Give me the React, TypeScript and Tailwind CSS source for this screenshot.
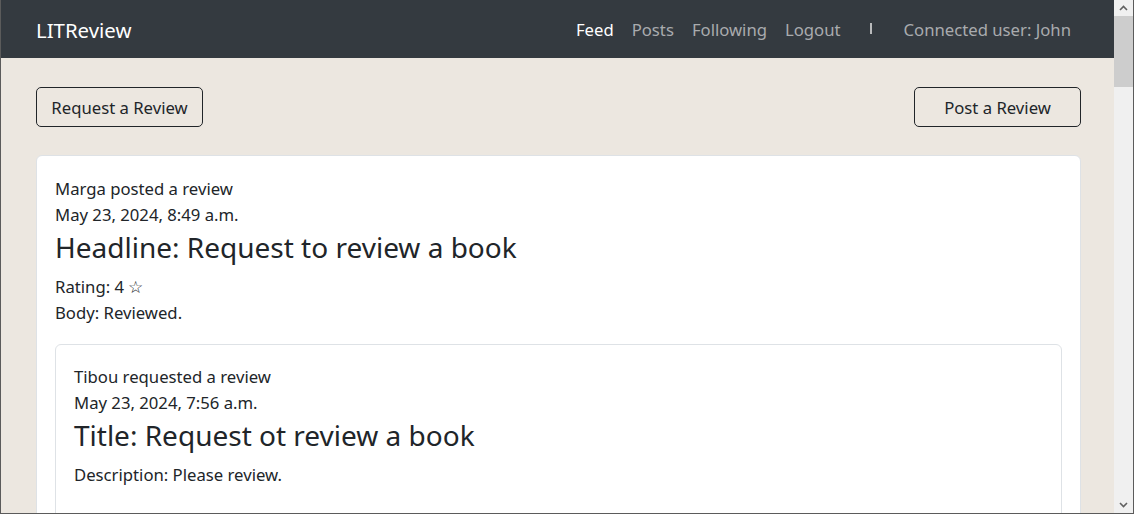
const font = { fontFamily: '"Noto Sans", "Open Sans", sans-serif' };

const NavBar = () => (
  <nav className="h-[58px] shrink-0 bg-[#343a40] flex items-center pl-[35px] pr-[43px] pt-[2px]">
    <span className="text-[20.4px] text-white">LITReview</span>
    <div className="ml-auto flex items-center text-[16.7px]">
      <a className="text-white">Feed</a>
      <a className="ml-[18px] text-[#a9abae]">Posts</a>
      <a className="ml-[18px] text-[#a9abae]">Following</a>
      <a className="ml-[18px] text-[#a9abae]">Logout</a>
      <span className="ml-[29px] mr-[32px] mb-[3px] w-[2px] h-[11px] bg-[#b9babc]" />
      <span className="text-[#a9abae]">Connected user: John</span>
    </div>
  </nav>
);

const ActionButton = ({ label }: { label: string }) => (
  <button className="w-[167px] h-[40px] border border-[#212529] rounded-[5px] text-[16.7px] text-[#212529] pt-[2px]">
    {label}
  </button>
);

const ScrollBar = () => (
  <div className="w-[19px] shrink-0 bg-[#f0f0f0] flex flex-col">
    <div className="h-[16px] flex items-center justify-center">
      <svg width="9" height="6" viewBox="0 0 9 6">
        <polyline points="1,5 4.5,1.5 8,5" fill="none" stroke="#606060" strokeWidth="1.6" />
      </svg>
    </div>
    <div className="h-[71px] bg-[#cdcdcd]" />
    <div className="flex-1" />
    <div className="h-[16px] flex items-center justify-center">
      <svg width="9" height="6" viewBox="0 0 9 6">
        <polyline points="1,1 4.5,4.5 8,1" fill="none" stroke="#606060" strokeWidth="1.6" />
      </svg>
    </div>
  </div>
);

export default function App() {
  return (
    <div
      className="w-[1134px] h-[514px] overflow-hidden flex border-l border-r border-b border-[#5b5b5b] text-[#212529]"
      style={font}
    >
      <div className="flex-1 flex flex-col bg-[#ece7e0] overflow-hidden">
        <NavBar />
        <main className="pl-[35px] pr-[33px]">
          <div className="mt-[29px] flex justify-between">
            <ActionButton label="Request a Review" />
            <ActionButton label="Post a Review" />
          </div>

          <div className="mt-[28px] bg-white border border-[#dee2e6] rounded-[6px] px-[18px] pt-[20px] pb-[18px]">
            <p className="text-[16.7px] leading-[26px]">Marga posted a review</p>
            <p className="text-[16.7px] leading-[26px]">May 23, 2024, 8:49 a.m.</p>
            <h3 className="mt-[2px] text-[28px] leading-[34px]">Headline: Request to review a book</h3>
            <p className="mt-[10px] text-[16.7px] leading-[26px]">Rating: 4 ☆</p>
            <p className="text-[16.7px] leading-[26px]">Body: Reviewed.</p>

            <div className="mt-[18px] border border-[#dee2e6] rounded-[6px] px-[18px] pt-[19px] pb-[18px]">
              <p className="text-[16.7px] leading-[26px]">Tibou requested a review</p>
              <p className="text-[16.7px] leading-[26px]">May 23, 2024, 7:56 a.m.</p>
              <h3 className="mt-[2px] text-[28px] leading-[34px]">Title: Request ot review a book</h3>
              <p className="mt-[10px] text-[16.7px] leading-[26px]">Description: Please review.</p>
              <div className="h-[60px]" />
            </div>
          </div>
        </main>
      </div>
      <ScrollBar />
    </div>
  );
}
